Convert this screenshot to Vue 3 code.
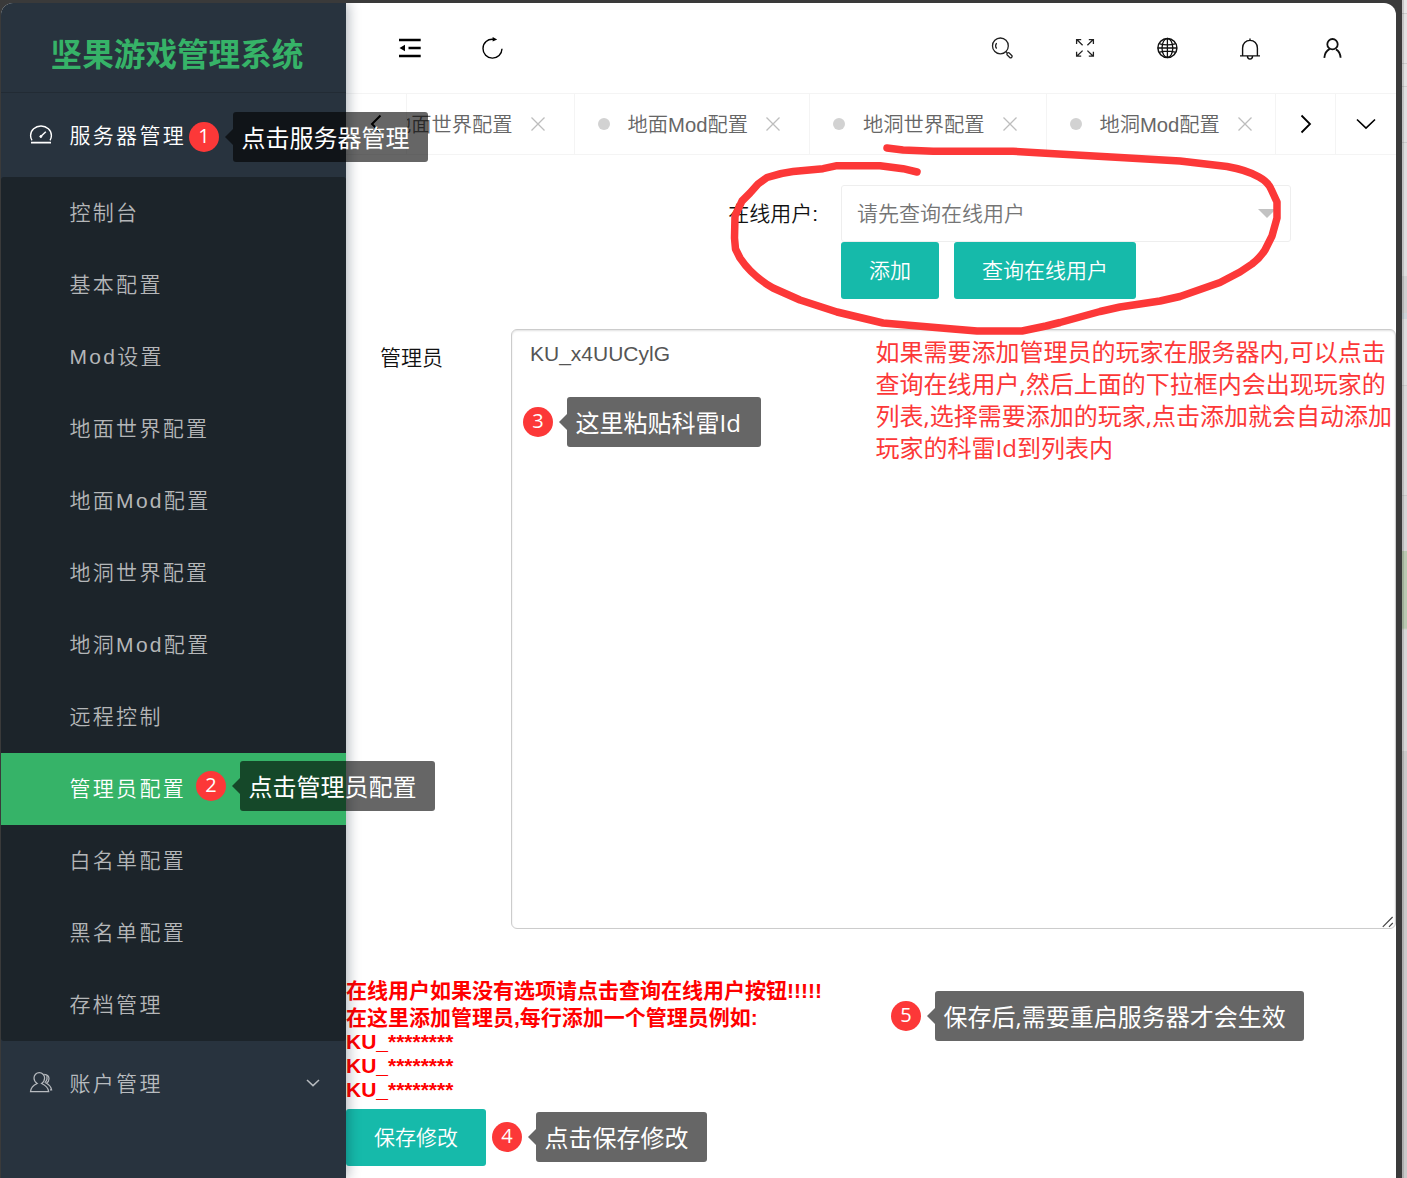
<script setup>
import { ref } from 'vue'

const menu = ['控制台', '基本配置', 'Mod设置', '地面世界配置', '地面Mod配置', '地洞世界配置', '地洞Mod配置', '远程控制', '管理员配置', '白名单配置', '黑名单配置', '存档管理']
const active = ref('管理员配置')
const tabs = ['地面世界配置', '地面Mod配置', '地洞世界配置', '地洞Mod配置']
const admins = ref('KU_x4UUCylG')
const steps = [
  { n: 1, text: '点击服务器管理', x: 189, y: 112, w: 195 },
  { n: 2, text: '点击管理员配置', x: 196, y: 761, w: 195 },
  { n: 3, text: '这里粘贴科雷Id', x: 523, y: 397, w: 194 },
  { n: 4, text: '点击保存修改', x: 492, y: 1112, w: 171 },
  { n: 5, text: '保存后,需要重启服务器才会生效', x: 891, y: 991, w: 369 }
]
const note = ['如果需要添加管理员的玩家在服务器内,可以点击', '查询在线用户,然后上面的下拉框内会出现玩家的', '列表,选择需要添加的玩家,点击添加就会自动添加', '玩家的科雷Id到列表内']
</script>

<template>
  <div class="desktop">
    <div class="window">
      <aside class="side">
        <h1 class="logo">坚果游戏管理系统</h1>
        <div class="group open">
          <svg class="gicon" width="24" height="24" viewBox="0 0 24 24" fill="none" stroke="currentColor">
            <path d="M3 17.3C1.8 15.7 1.6 14 1.6 12.4A10.4 9.4 0 0 1 22.400 12.4C22.400 14 22.2 15.7 21 17.3" stroke-width="1.4" />
            <path d="M2 19.7H22" stroke-width="1.8" />
            <path d="M11.5 13.8L16.8 8.8" stroke-width="1.5" />
            <circle cx="11.8" cy="13.5" r="1" fill="currentColor" />
          </svg>
          <span>服务器管理</span>
        </div>
        <ul class="sub">
          <li v-for="m in menu" :key="m" :class="{ active: m === active }">{{ m }}</li>
        </ul>
        <div class="group">
          <svg class="gicon" width="24" height="24" viewBox="0 0 24 24" fill="none" stroke="currentColor" stroke-width="1.2">
            <path d="M8.2 12.500C6.2 11.200 5 9.4 5 7C5 4.2 7.3 1.600 10.3 1.600S15.6 4.2 15.6 7C15.6 9.4 14.6 11.200 12.6 12.500C16.5 14.200 19.3 17.2 19.7 20.600H1.5C1.800 17.2 4.3 14.200 8.2 12.500Z" />
            <path d="M15.2 3.300C18 3.600 20 5.200 20 7.700C20 9.6 19 11.200 17.4 12.300C20 13.600 22 15.9 22.6 18.900H21M17.6 5.300C18.6 7.2 17.6 9.900 15.8 11.900" />
          </svg>
          <span>账户管理</span>
          <svg class="arrow" width="14" height="8" viewBox="0 0 14 8" fill="none" stroke="currentColor" stroke-width="1.5"><path d="M1 1L7 6.600L13 1" /></svg>
        </div>
      </aside>

      <main class="main">
        <header class="bar">
          <svg class="up" width="24" height="24" viewBox="0 0 24 24"><path d="M1 2.8H22.700V5.2H1ZM10.5 10.8H22.700V13.2H10.5ZM1 18.8H22.700V21.2H1ZM1.5 12L7 8.8V15.2Z" /></svg>
          <svg width="24" height="24" viewBox="0 0 24 24" fill="none" stroke="#000" stroke-width="1.4">
            <path d="M13 3.400C6.600 2.4 2 6.8 2 12.4A9.5 9.5 0 0 0 21 12.8" />
            <path d="M11.600 .9L16.200 3.4L11.600 5.6Z" fill="#000" stroke="none" />
          </svg>
          <span class="grow"></span>
          <svg width="24" height="24" viewBox="0 0 24 24" fill="none" stroke="#222" stroke-width="1.3">
            <circle cx="10.400" cy="9.9" r="7.900" />
            <path d="M6.600 7C5.300 8.9 5.300 10.8 6.600 12.7M16 15.600L17.2 16.800" />
            <rect x="-1.4" y="-3" width="2.800" height="6" rx="1.2" transform="translate(19.500 19.200) rotate(-45)" />
          </svg>
          <svg width="24" height="24" viewBox="0 0 24 24" fill="none" stroke="#222" stroke-width="1.3">
            <path d="M3.6 8V3.6H8.2M4 3.8L9.6 9.2M15.8 3.6H20.4V8M20 3.8L14.4 9.2M3.6 15.8V20.2H8.2M4 20L9.6 14.6M15.8 20.2H20.4V15.8M20 20L14.4 14.6" />
          </svg>
          <svg width="24" height="24" viewBox="0 0 24 24" fill="none" stroke="#111" stroke-width="1.3">
            <circle cx="12.400" cy="12" r="9.5" stroke-width="1.5" />
            <ellipse cx="12.400" cy="12" rx="5.4" ry="9.5" />
            <path d="M12.400 2.4V21.6M2.8 12H22M4.600 7.8C9.400 9.2 15.400 9.2 20.2 7.8M4.600 16.2C9.400 14.8 15.400 14.8 20.2 16.2" />
          </svg>
          <svg width="24" height="24" viewBox="0 0 24 24" fill="none" stroke="#111" stroke-width="1.4">
            <path d="M4.6 19.500V12C4.6 7.4 7.8 4.4 12 4.4S19.4 7.4 19.4 12V19.500M2 19.900H22M12 2.6V4.6M9.4 20C9.6 24.2 14.4 24.2 14.6 20" />
          </svg>
          <svg width="24" height="24" viewBox="0 0 24 24" fill="none" stroke="#111" stroke-width="1.8">
            <circle cx="12.500" cy="8.200" r="5.200" />
            <path d="M4.300 21.8C4.7 17.2 6.5 14.600 9.700 12.9M16 13.4C18.6 14.8 20.3 17.4 20.600 21.8" />
          </svg>
        </header>

        <nav class="tabs">
          <div class="ctl"><svg width="12" height="20" viewBox="0 0 12 20" fill="none" stroke="#000" stroke-width="2"><path d="M10.5 1.5L2 10L10.5 18.5" /></svg></div>
          <div class="viewport">
            <div class="strip">
              <div v-for="t in tabs" :key="t" class="tab">
                <i class="dot"></i><span>{{ t }}</span>
                <svg width="14" height="14" viewBox="0 0 14 14" fill="none" stroke="#bdbdbd" stroke-width="1.3"><path d="M.5 .5L13.5 13.5M13.5 .5L.5 13.5" /></svg>
              </div>
            </div>
          </div>
          <div class="ctl right"><svg width="12" height="20" viewBox="0 0 12 20" fill="none" stroke="#000" stroke-width="1.8"><path d="M1.5 1.5L10 10L1.5 18.5" /></svg></div>
          <div class="ctl right last"><svg width="20" height="12" viewBox="0 0 20 12" fill="none" stroke="#000" stroke-width="1.6"><path d="M1 1.5L10 10.2L19 1.5" /></svg></div>
        </nav>

        <section class="content">
          <div class="row">
            <label class="ulabel">在线用户:</label>
            <div class="field">
              <div class="select"><span>请先查询在线用户</span><i class="caret"></i></div>
              <div class="btns"><button class="btn">添加</button><button class="btn">查询在线用户</button></div>
            </div>
          </div>
          <div class="row area">
            <label class="alabel">管理员</label>
            <div class="box">
              <textarea v-model="admins" spellcheck="false"></textarea>
              <svg class="grip" width="12" height="12" viewBox="0 0 12 12" fill="none" stroke="#444" stroke-width="1.2"><path d="M.8 10.800L10.600 1M7 10.800L10.800 7" /></svg>
            </div>
          </div>
          <div class="tips">
            <p>在线用户如果没有选项请点击查询在线用户按钮!!!!!</p>
            <p>在这里添加管理员,每行添加一个管理员例如:</p>
            <p v-for="i in 3" :key="i" class="id">KU_********</p>
          </div>
          <button class="btn save">保存修改</button>
        </section>
      </main>
    </div>
    <div class="behind"></div>

    <svg class="scribble" width="1407" height="1178" viewBox="0 0 1407 1178" fill="none">
      <path d="M887 148L903 150L933 151.300L1013 151.300L1050 153.500L1120 157.500L1180 161L1227 166.500Q1247 170 1259 177Q1268 182 1271 189L1277 202V218L1272 236L1265 250Q1260 258 1252 264L1240 272L1220 282.500L1180 296.500L1160 301L1120 307L1100 311.500L1060 322.500L1046 326L1022 331H977L947 328.500L883 323L837 312L800 300L773 288Q752 276 740 258L735.500 249L734.500 238L735 216L742 201L750 193L758 184L767 177.500Q780 173 793 171.500L823 168.700L837 165.700H880L903 168.700L917 172" />
    </svg>
    <div class="note"><p v-for="l in note" :key="l">{{ l }}</p></div>
    <div v-for="s in steps" :key="s.n" class="step" :style="{ left: s.x + 'px', top: s.y + 'px' }">
      <b class="num">{{ s.n }}</b>
      <span class="tag" :style="{ width: s.w + 'px' }">{{ s.text }}</span>
    </div>
  </div>
</template>

<style>
body { margin: 0; overflow: hidden; }
</style>
<style scoped>
* { box-sizing: border-box; }
p, ul, h1 { margin: 0; padding: 0; list-style: none; }
svg { display: block; flex: none; }
.desktop { position: relative; width: 1407px; height: 1178px; overflow: hidden; display: flex; background: #3a3a3a; font: 350 21px/30px "Liberation Sans", "Noto Sans CJK SC", sans-serif; color: #111; }
.window { position: relative; z-index: 0; width: 1395px; height: 1175px; margin: 3px 6px 0 1px; display: flex; background: #fff; border-radius: 12px 12px 0 0; overflow: hidden; flex: none; }
.behind { flex: 1; background: linear-gradient(90deg, rgba(0,0,0,.14) 0 2px, transparent 2px), linear-gradient(#e6e6e6 0 13px, #ccc 13px 14px, #e2e2e2 14px 63px, #ccc 63px 64px, #e2e2e2 64px 86px, #ccc 86px 87px, #e0e0e0 87px 142px, #ccc 142px 143px, #dedede 143px 276px, #d0d0d0 276px 313px, #cdd4d9 313px 319px, #dedede 319px 385px, #ccc 385px 386px, #dadada 386px 495px, #c8c8c8 495px 496px, #d6d6d6 496px 551px, #b9c9b1 551px 628px, #d8d8d8 630px 751px, #cacaca 751px); }

.side { position: relative; z-index: 2; width: 345px; background: #28333e; box-shadow: 2px 0 12px rgba(0,21,41,.32); flex: none; }
.logo { height: 90px; border-bottom: 1px solid #222b34; text-align: center; font-size: 31.6px; line-height: 105px; font-weight: 700; color: #36b368; padding-left: 7px; }
.group { height: 84px; display: flex; align-items: center; padding-left: 28px; letter-spacing: 2.3px; color: #b7bbbf; }
.group span { margin: 1px 0 0 16.500px; }
.group.open { color: #fff; }
.arrow { margin-left: auto; margin-right: 26px; }
.sub { background: #1c242a; border-radius: 3px; }
.sub li { height: 72px; line-height: 72px; padding-left: 68.500px; letter-spacing: 2.3px; color: #b4b6b8; }
.sub li.active { background: #36b368; color: #fff; }

.main { width: 1050px; display: flex; flex-direction: column; }
.bar { height: 91px; border-bottom: 1px solid #f4f4f4; display: flex; align-items: center; gap: 58.500px; padding: 0 52px; }
.up { margin-bottom: 1px; }
.grow { flex: 1; }
.tabs { height: 61px; border-bottom: 1px solid #f4f4f4; display: flex; }
.ctl { width: 60px; display: flex; align-items: center; justify-content: center; flex: none; }
.ctl.right { border-left: 1px solid #f4f4f4; }
.ctl.last { width: 61px; }
.viewport { flex: 1; overflow: hidden; border-left: 1px solid #f4f4f4; }
.strip { display: flex; width: max-content; height: 60px; margin-left: -68.500px; }
.tab { display: flex; align-items: center; padding: 0 29px 0 23px; border-right: 1px solid #f4f4f4; font-size: 20.25px; color: #666; }
.tab span { margin: 1px 18.500px 0 17.500px; }
.dot { width: 12px; height: 12px; border-radius: 50%; background: #d2d2d2; }

.content { flex: 1; padding-top: 30px; }
.row { display: flex; }
.ulabel { width: 495px; padding: 14px 23px 0 0; text-align: right; }
.field { width: 450px; }
.select { height: 57px; border: 1px solid #eee; border-radius: 3px; display: flex; align-items: center; justify-content: space-between; padding: 0 14px 0 15px; color: #757575; }
.caret { border: 9px solid transparent; border-top-color: #c2c2c2; border-bottom: 0; }
.btns { display: flex; gap: 15px; }
.btn { height: 57px; padding: 0 28px; border: 0; border-radius: 3px; background: #16baaa; color: #fff; font: inherit; line-height: 58px; display: block; }
.area { margin-top: 30px; }
.alabel { width: 165px; padding: 14px 0 0 34px; }
.box { position: relative; width: 885px; height: 600px; }
.grip { position: absolute; right: 2px; bottom: 1px; }
textarea { width: 885px; height: 600px; border: 1px solid #ccc; border-radius: 6px; background: #fff; box-shadow: inset 0 1px 2px rgba(0,0,0,.12); padding: 9px 18px; margin: 0; font: 400 21px/30px "Liberation Sans", "Noto Sans CJK SC", sans-serif; color: #555; outline: 0; display: block; resize: none; }
.tips { margin-top: 48px; color: #f00; font-weight: 700; }
.tips p { height: 27px; line-height: 27px; }
.tips p.id { height: 24px; line-height: 22px; }
.save { margin-top: 6px; }

.scribble { position: absolute; left: 0; top: 0; stroke: #fc3838; stroke-width: 7.5; stroke-linecap: round; stroke-linejoin: round; pointer-events: none; }
.note { position: absolute; left: 875.500px; top: 336px; white-space: nowrap; color: #fc3838; font: 400 24px/32px "Open Sans", "Noto Sans CJK SC", sans-serif; }
.step { position: absolute; display: flex; align-items: center; height: 50px; font-family: "Open Sans", "Noto Sans CJK SC", sans-serif; color: #fff; }
.num { width: 30px; height: 30px; border-radius: 50%; background: #fc3838; font-size: 20px; font-weight: 400; line-height: 28px; text-align: center; }
.tag { position: relative; height: 50px; margin-left: 14px; padding-left: 8.500px; border-radius: 3px; background: rgba(0,0,0,.6); font-size: 24px; line-height: 51px; font-weight: 400; white-space: nowrap; }
.tag::before { content: ""; position: absolute; left: -8px; top: 17px; border: 8px solid transparent; border-right-color: rgba(0,0,0,.6); border-left: 0; }
</style>
